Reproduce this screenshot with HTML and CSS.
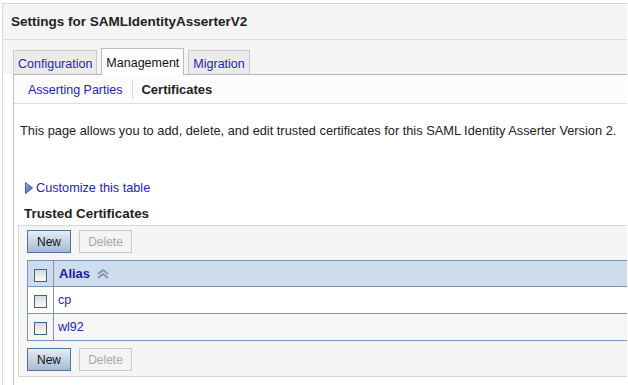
FILE: index.html
```html
<!DOCTYPE html>
<html lang="en">
<head>
  <meta charset="UTF-8" />
  <title>Settings for SAMLIdentityAsserterV2</title>
  <link rel="stylesheet" href="styles.css">
</head>
<body>
  <div class="page">
    <div class="title">Settings for SAMLIdentityAsserterV2</div>

    <div class="tabbar">
      <a class="tab">Configuration</a>
      <a class="tab active">Management</a>
      <a class="tab">Migration</a>
    </div>

    <div class="tabbody">
      <div class="subtabs">
        <a class="subtab">Asserting Parties</a>
        <span class="sep"></span>
        <span class="subtab current">Certificates</span>
      </div>

      <p class="intro">This page allows you to add, delete, and edit trusted certificates for this SAML Identity Asserter Version 2.</p>

      <a class="customize">
        <svg width="8" height="12" viewBox="0 0 8 12">
          <defs>
            <linearGradient id="tri" x1="0" y1="0" x2="1" y2="1">
              <stop offset="0" stop-color="#9db6e6"/>
              <stop offset="1" stop-color="#2d54a6"/>
            </linearGradient>
          </defs>
          <polygon points="0.5,0.5 7.5,6 0.5,11.5" fill="url(#tri)" stroke="#3a5fa8" stroke-width="1"/>
        </svg>
        Customize this table
      </a>

      <h3 class="section">Trusted Certificates</h3>

      <div class="tablebox">
        <div class="buttons">
          <button class="btn primary">New</button>
          <button class="btn disabled">Delete</button>
        </div>

        <table class="grid">
          <tr class="head">
            <th class="chk"><span class="box"></span></th>
            <th class="alias">Alias
              <svg class="sort" width="14" height="10" viewBox="0 0 14 10">
                <polyline points="2,5 7,1 12,5" fill="none" stroke="#7f96b6" stroke-width="1.8"/>
                <polyline points="2,9 7,5 12,9" fill="none" stroke="#7f96b6" stroke-width="1.8"/>
              </svg>
            </th>
          </tr>
          <tr>
            <td class="chk"><span class="box"></span></td>
            <td><a>cp</a></td>
          </tr>
          <tr class="alt">
            <td class="chk"><span class="box"></span></td>
            <td><a>wl92</a></td>
          </tr>
        </table>

        <div class="buttons">
          <button class="btn primary">New</button>
          <button class="btn disabled">Delete</button>
        </div>
      </div>
    </div>
  </div>
</body>
</html>
```

FILE: styles.css
```css
body {
  margin: 0;
  background: #fff;
  font-family: "Liberation Sans", Arial, sans-serif;
  font-size: 12px;
  color: #222;
}
a {
  color: #2323b8;
}
.page {
  width: 624px;
  height: 382px;
  margin: 3px 0 0 2px;
  border-top: 1px solid #d4d4d4;
  border-left: 1px solid #dadada;
  overflow: hidden;
}
.title {
  height: 35px;
  line-height: 35px;
  padding-left: 8px;
  background: #f5f5f5;
  border-bottom: 1px solid #dcdcdc;
  font-weight: bold;
  font-size: 13.5px;
  color: #222;
}
.tabbar {
  display: flex;
  align-items: flex-end;
  gap: 4px;
  height: 34px;
  padding-left: 10px;
  background: #f5f5f5;
}
.tab {
  height: 23px;
  line-height: 26px;
  padding: 0 4px;
  background: #ebebeb;
  border: 1px solid #c9c9c9;
  border-bottom: none;
  font-size: 12.5px;
}
.tab.active {
  height: 26px;
  line-height: 29px;
  margin-bottom: -1px;
  background: #fff;
  color: #111;
  border-color: #bdbdbd;
  position: relative;
}
.tabbody {
  margin-left: 10px;
  height: 320px;
  border-left: 1px solid #c4c4c4;
  border-top: 1px solid #b4b4b4;
}
.subtabs {
  display: flex;
  align-items: center;
  height: 29px;
  padding-left: 14px;
  padding-top: 1px;
  box-sizing: border-box;
  background: #fcfbfd;
  border-bottom: 1px solid #dedede;
}
.subtab {
  font-size: 12.5px;
}
.subtab.current {
  font-weight: bold;
  font-size: 13px;
  color: #222;
}
.sep {
  width: 1px;
  height: 18px;
  margin: 0 8px 0 10px;
  background: #d6d6d6;
}
.intro {
  margin: 19px 0 0 6px;
  line-height: 16px;
  font-size: 12.8px;
}
.customize {
  display: flex;
  align-items: center;
  gap: 3px;
  margin: 41px 0 0 11px;
  height: 16px;
  font-size: 12.7px;
}
.section {
  margin: 10px 0 0 10px;
  height: 16px;
  line-height: 16px;
  font-size: 13.4px;
  color: #222;
}
.tablebox {
  margin: 3px 0 0 4px;
  padding: 4px 0 5px 8px;
  background: #f5f5f5;
  border: 1px solid #d6d6d6;
  border-right: none;
}
.buttons {
  display: flex;
  gap: 8px;
}
.btn {
  height: 23px;
  padding: 0;
  font-family: "Liberation Sans", Arial, sans-serif;
  font-size: 12px;
}
.btn.primary {
  width: 44px;
  color: #111;
  background: linear-gradient(#e6edf5, #a6bbd3);
  border: 1px solid #52749a;
}
.btn.disabled {
  width: 53px;
  color: #a9a9a9;
  background: #f4f4f4;
  border: 1px solid #c9c9c9;
}
.grid {
  width: 620px;
  margin: 7px 0 7px 0;
  border-collapse: collapse;
  border: 1px solid #7c97b6;
  border-right: none;
}
.grid td,
.grid th {
  height: 26px;
  padding: 0;
  border-top: 1px solid #7c97b6;
  text-align: left;
}
.grid tr.head th {
  background: #cfdcee;
  height: 25px;
}
.grid tr td {
  background: #fff;
}
.grid tr.alt td {
  background: #f6f6f6;
}
.grid .chk {
  width: 25px;
  border-right: 1px solid #7c97b6;
  text-align: center;
}
.box {
  display: inline-block;
  width: 11px;
  height: 11px;
  margin-top: 3px;
  border: 1px solid #3b6288;
  background: linear-gradient(#d9d9d9, #fbfbfb);
  vertical-align: middle;
}
.grid td a {
  padding-left: 4px;
  font-size: 12.5px;
}
.alias {
  padding-left: 5px !important;
  color: #1c1c9e;
  font-size: 13px;
}
.sort {
  vertical-align: -1px;
  margin-left: 2px;
}
```
